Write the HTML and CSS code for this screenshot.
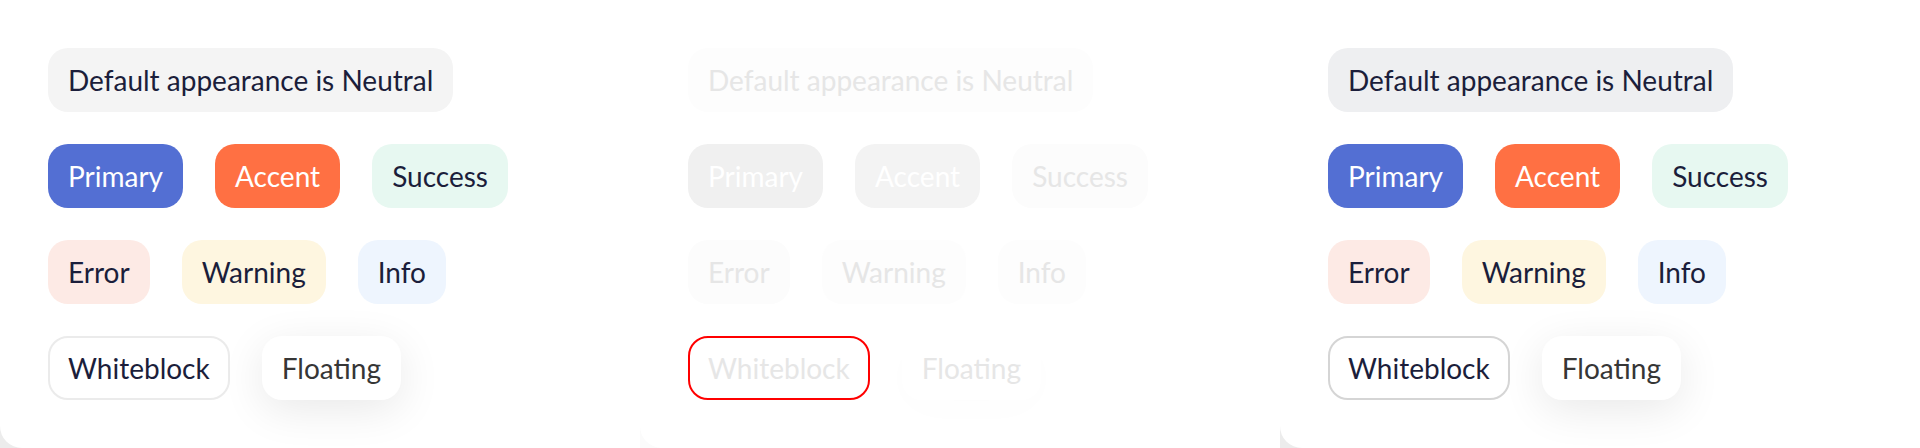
FILE: index.html
```html
<!DOCTYPE html>
<html lang="en">
<head>
<meta charset="utf-8">
<title>Chips</title>
<link rel="stylesheet" href="styles.css">
</head>
<body>
<div class="stage">
  <section class="panel panel-base">
    <div class="card">
      <div class="row"><span class="chip neutral">Default appearance is Neutral</span></div>
      <div class="row">
        <span class="chip primary">Primary</span>
        <span class="chip accent">Accent</span>
        <span class="chip success">Success</span>
      </div>
      <div class="row">
        <span class="chip error">Error</span>
        <span class="chip warning">Warning</span>
        <span class="chip info">Info</span>
      </div>
      <div class="row">
        <span class="chip whiteblock">Whiteblock</span>
        <span class="chip floating">Floating</span>
      </div>
    </div>
  </section>
  <section class="panel panel-diff">
    <div class="card">
      <div class="row"><span class="chip neutral">Default appearance is Neutral</span></div>
      <div class="row">
        <span class="chip primary">Primary</span>
        <span class="chip accent">Accent</span>
        <span class="chip success">Success</span>
      </div>
      <div class="row">
        <span class="chip error">Error</span>
        <span class="chip warning">Warning</span>
        <span class="chip info">Info</span>
      </div>
      <div class="row">
        <span class="chip whiteblock">Whiteblock</span>
        <span class="chip floating">Floating</span>
      </div>
    </div>
  </section>
  <section class="panel panel-new">
    <div class="card">
      <div class="row"><span class="chip neutral">Default appearance is Neutral</span></div>
      <div class="row">
        <span class="chip primary">Primary</span>
        <span class="chip accent">Accent</span>
        <span class="chip success">Success</span>
      </div>
      <div class="row">
        <span class="chip error">Error</span>
        <span class="chip warning">Warning</span>
        <span class="chip info">Info</span>
      </div>
      <div class="row">
        <span class="chip whiteblock">Whiteblock</span>
        <span class="chip floating">Floating</span>
      </div>
    </div>
  </section>
</div>
</body>
</html>
```
FILE: styles.css
```css
html, body {
  margin: 0;
  padding: 0;
  background: #ffffff;
}

body {
  font-family: "Lato", "Inter", sans-serif;
  overflow: hidden;
}

.stage {
  display: flex;
  width: 1920px;
  height: 448px;
}

.panel {
  width: 640px;
  height: 448px;
  background: #ececec;
}

.panel-diff {
  background: #fbfbfb;
}

.card {
  box-sizing: border-box;
  height: 100%;
  background: #ffffff;
  border-bottom-left-radius: 22px;
  padding: 48px;
  display: flex;
  flex-direction: column;
  gap: 32px;
}

.row {
  display: flex;
  gap: 32px;
}

.chip {
  box-sizing: border-box;
  height: 64px;
  display: inline-flex;
  align-items: center;
  padding: 0 20px;
  border-radius: 20px;
  font-size: 28px;
  line-height: 1;
  color: #1b1e3b;
  white-space: nowrap;
}

/* base panel */
.neutral { background: #f4f4f4; }
.primary { background: #536fd3; color: #ffffff; }
.accent { background: #ff7043; color: #ffffff; }
.success { background: #e7f8f1; }
.error { background: #fdeae5; }
.warning { background: #fef6e0; }
.info { background: #eef5fe; }
.whiteblock { background: #ffffff; border: 2px solid #ebebeb; padding: 0 18px; }
.floating {
  background: #ffffff;
  color: #363636;
  box-shadow: 0 10px 44px rgba(0, 0, 0, 0.09);
}

/* new panel */
.panel-new .neutral { background: #eeeff1; }
.panel-new .whiteblock { border-color: #d5d5d5; }

/* diff panel: faded greyscale */
.panel-diff .chip { color: #e6e6e6; }
.panel-diff .neutral { background: #fdfdfd; }
.panel-diff .primary { background: #f0f0f0; color: #ffffff; }
.panel-diff .accent { background: #f3f3f3; color: #ffffff; }
.panel-diff .success { background: #fcfcfc; }
.panel-diff .error { background: #fcfcfc; }
.panel-diff .warning { background: #fdfdfd; }
.panel-diff .info { background: #fdfdfd; }
.panel-diff .whiteblock { border-color: #ff0000; }
.panel-diff .floating {
  color: #e6e6e6;
  box-shadow: 0 10px 44px rgba(0, 0, 0, 0.012);
}
```
